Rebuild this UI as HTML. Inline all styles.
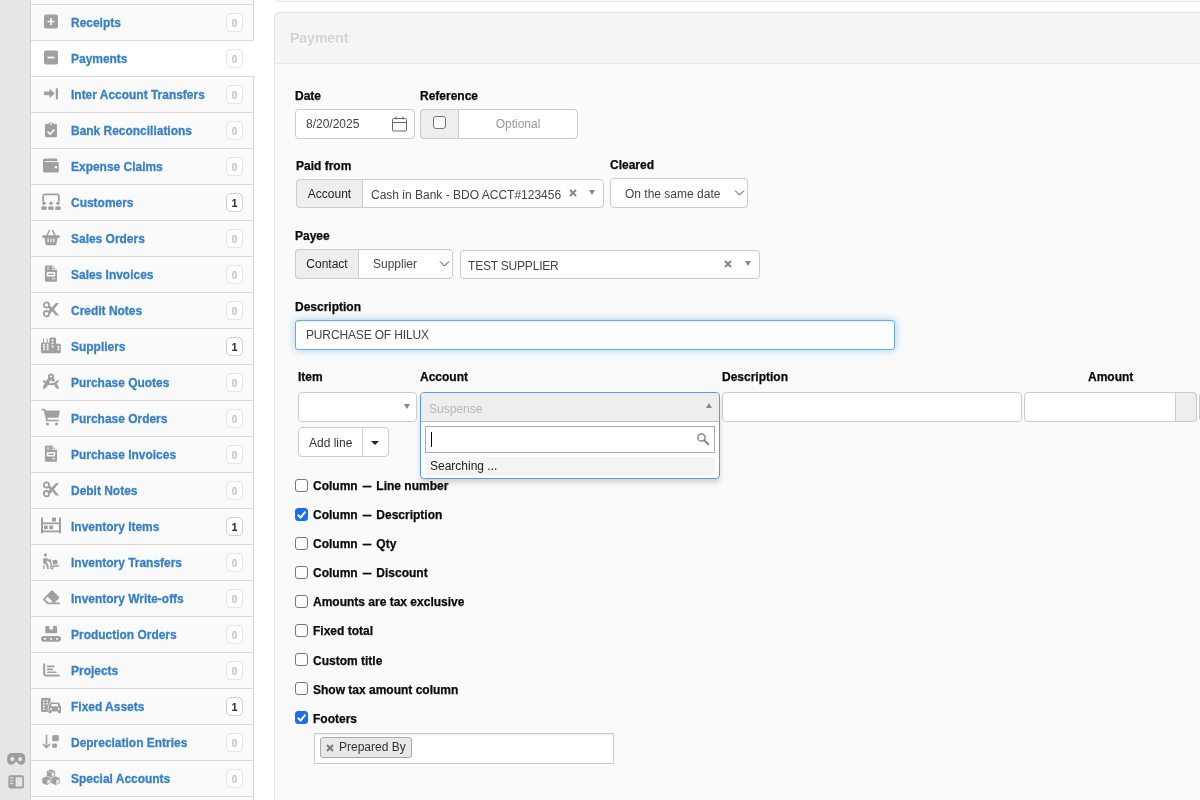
<!DOCTYPE html>
<html><head><meta charset="utf-8"><title>Payment</title>
<style>
*{box-sizing:border-box;margin:0;padding:0}
html,body{width:1200px;height:800px;overflow:hidden;background:#fff;font-family:"Liberation Sans",Arial,Helvetica,sans-serif;font-size:12px;color:#333}
.abs{position:absolute}
#strip{position:absolute;left:0;top:0;width:31px;height:800px;background:#e6e6e6;border-right:1px solid #cfcfcf}
#side{position:absolute;left:31px;top:0;width:223px;height:800px;background:#fafafa;border-right:1px solid #d4d4d4}
.row{position:absolute;left:0;width:223px;height:37px;border-top:1px solid #d9d9d9;border-bottom:1px solid #d9d9d9;border-right:1px solid #d4d4d4;background:#fafafa}
.row.sel{background:#fff;border-right-color:#fff}
.row .ic{position:absolute;left:10px;top:7px}
.row .t{position:absolute;left:40px;top:10px;font-size:13px;font-weight:bold;color:#3680c8;line-height:16px;white-space:nowrap;transform:scaleX(.92);transform-origin:0 50%;-webkit-text-stroke:.3px #3680c8}
.row .b{position:absolute;left:195px;top:8px;width:17px;height:19px;border:1px solid #e4e4e4;border-radius:5px;background:#fff;color:#c8c8c8;font-size:10px;font-weight:bold;text-align:center;line-height:19px;-webkit-text-stroke:.2px #c8c8c8}
.row .b.one{color:#333;border-color:#cfcfcf;-webkit-text-stroke:.2px #333}
#panel{position:absolute;left:274px;top:12px;width:960px;height:820px;border:1px solid #e3e3e3;border-radius:5px;background:#fafafa}
#phead{position:absolute;left:0;top:0;right:0;height:51px;background:#f5f5f5;border-bottom:1px solid #e8e8e8;border-radius:5px 5px 0 0}
#ptitle{position:absolute;left:290px;top:30px;font-size:14px;font-weight:bold;color:#d4d4d4;line-height:16px;text-shadow:0 1px 0 #fff}
#prev{position:absolute;left:274px;top:-20px;width:960px;height:22px;border:1px solid #e3e3e3;border-radius:5px;background:#fafafa}
.lbl{position:absolute;font-size:12px;font-weight:bold;color:#0a0a0a;-webkit-text-stroke:.25px #0a0a0a;line-height:14px;white-space:nowrap}
.box{position:absolute;border:1px solid #ccc;border-radius:4px;background:#fff}
.addon{position:absolute;background:#eee;border:1px solid #ccc;border-radius:4px 0 0 4px;color:#222;text-align:center;font-size:12px}
.txt{position:absolute;font-size:12px;color:#444;line-height:14px;white-space:nowrap}
.cb{position:absolute;width:13px;height:13px;border:1px solid #767676;border-radius:3px;background:#fff}
.cb.on{background:#1670f7;border-color:#1670f7}
.cb.on svg{position:absolute;left:-1px;top:-1px}
.cl{position:absolute;left:313px;font-size:12px;font-weight:bold;color:#0a0a0a;-webkit-text-stroke:.25px #0a0a0a;line-height:14px;white-space:nowrap}
.d{display:inline-block;transform:scaleX(.72)}
.arr{position:absolute;width:0;height:0;border-left:3.5px solid transparent;border-right:3.5px solid transparent;border-top:5px solid #888}
.arr.up{border-top:0;border-bottom:5px solid #888}
.x{position:absolute;font-size:11px;font-weight:bold;color:#888;line-height:12px}
#wrap{position:absolute;left:0;top:0;width:1200px;height:800px;overflow:hidden;will-change:transform}
</style></head><body><div id="wrap">
<div id="strip">
<svg class="abs" style="left:6px;top:751px" width="20" height="16" viewBox="0 0 20 16"><path d="M5.700 2h9a4.500 4.500 0 0 1 4.500 4.500v3a4.300 4.300 0 0 1-4.300 4.300c-1.600 0-2.500-.8-3.200-2-.4-.7-.8-1-1.500-1s-1.100.3-1.500 1c-.7 1.200-1.600 2-3.200 2a4.300 4.300 0 0 1-4.300-4.300v-3a4.500 4.500 0 0 1 4.500-4.500z" fill="#9e9e9e"/><circle cx="6.300" cy="8.100" r="2.100" fill="#e6e6e6"/><circle cx="14.100" cy="8.100" r="2.100" fill="#e6e6e6"/></svg>
<svg class="abs" style="left:8px;top:774px" width="17" height="15" viewBox="0 0 17 15"><rect x=".4" y="1.300" width="15.500" height="13.300" rx="2" fill="#9e9e9e"/><rect x="7.600" y="3.300" width="6.700" height="9.300" rx=".4" fill="#e6e6e6"/><path d="M2 3.900h3.400M2 6.700h3.400M2 9.500h3.400" stroke="#e6e6e6" stroke-width="1.300" opacity=".85"/></svg>
</div>
<div id="side">
<div class="row" style="top:4px"><svg class="ic" viewBox="0 0 20 20" width="20" height="20"><rect x="3" y="2.500" width="14" height="14" rx="2" fill="#a0a0a0"/><path d="M10 6v7M6.500 9.500h7" stroke="#fafafa" stroke-width="1.700"/></svg><span class="t">Receipts</span><span class="b">0</span></div>
<div class="row sel" style="top:40px"><svg class="ic" viewBox="0 0 20 20" width="20" height="20"><rect x="3" y="2.500" width="14" height="14" rx="2" fill="#a0a0a0"/><path d="M6.500 9.500h7" stroke="#ffffff" stroke-width="1.700"/></svg><span class="t">Payments</span><span class="b">0</span></div>
<div class="row" style="top:76px"><svg class="ic" viewBox="0 0 20 20" width="20" height="20"><path d="M3.600 7.600h4.900V4.700l5.300 4.800-5.300 4.800v-3H3.600a.6.600 0 0 1-.6-.6V8.200a.6.600 0 0 1 .6-.6z" fill="#a0a0a0"/><rect x="14.800" y="4.200" width="2.200" height="11" rx=".4" fill="#a0a0a0"/></svg><span class="t">Inter Account Transfers</span><span class="b">0</span></div>
<div class="row" style="top:112px"><svg class="ic" viewBox="0 0 20 20" width="20" height="20"><path d="M5.500 3.800h2.300a2.300 2.300 0 0 1 4.400 0h2.300a1.500 1.500 0 0 1 1.500 1.500v10.400a1.500 1.500 0 0 1-1.500 1.500h-9a1.500 1.500 0 0 1-1.500-1.500V5.300a1.500 1.500 0 0 1 1.500-1.500z" fill="#a0a0a0"/><circle cx="10" cy="3.900" r=".9" fill="#fafafa"/><path d="M6.500 11.800l2.700 2.300 4.200-4.600" stroke="#fafafa" stroke-width="1.800" fill="none"/></svg><span class="t">Bank Reconciliations</span><span class="b">0</span></div>
<div class="row" style="top:148px"><svg class="ic" viewBox="0 0 20 20" width="20" height="20"><path d="M4.200 2.400h11.300a.8.800 0 0 1 .8.800V6h0a1.500 1.500 0 0 1 1.500 1.500v7.400a1.500 1.500 0 0 1-1.500 1.500H3.600a1.600 1.600 0 0 1-1.600-1.600V4.600a2.200 2.200 0 0 1 2.200-2.200z" fill="#a0a0a0"/><path d="M4 5.550h13" stroke="#fafafa" stroke-width=".9"/><rect x="13.800" y="10" width="2.200" height="2.300" rx=".3" fill="#fafafa"/></svg><span class="t">Expense Claims</span><span class="b">0</span></div>
<div class="row" style="top:184px"><svg class="ic" viewBox="0 0 20 20" width="20" height="20"><path d="M2.100 8.800V4.400a2 2 0 0 1 2-2h11.800a2 2 0 0 1 2 2v4.400" stroke="#a0a0a0" stroke-width="1.800" fill="none" stroke-linecap="round"/><circle cx="3.00" cy="11.300" r="1.700" fill="#a0a0a0"/><rect x="0.10" y="14.300" width="5.800" height="3.600" rx="1.700" fill="#a0a0a0"/><circle cx="10.00" cy="11.300" r="1.700" fill="#a0a0a0"/><rect x="7.10" y="14.300" width="5.800" height="3.600" rx="1.700" fill="#a0a0a0"/><circle cx="17.00" cy="11.300" r="1.700" fill="#a0a0a0"/><rect x="14.10" y="14.300" width="5.800" height="3.600" rx="1.700" fill="#a0a0a0"/></svg><span class="t">Customers</span><span class="b one">1</span></div>
<div class="row" style="top:220px"><svg class="ic" viewBox="0 0 20 20" width="20" height="20"><rect x="1.200" y="7.300" width="17.600" height="2.400" rx=".9" fill="#a0a0a0"/><path d="M3.200 9h13.600l-1.400 7.200a1.400 1.400 0 0 1-1.400 1.100H6a1.400 1.400 0 0 1-1.400-1.100z" fill="#a0a0a0"/><path d="M5.800 7.600l2.700-5.200M14.200 7.600l-2.700-5.200" stroke="#a0a0a0" stroke-width="1.500" fill="none" stroke-linecap="round"/><path d="M7.100 10.600v3.600M10 10.600v3.600M12.900 10.600v3.600" stroke="#fafafa" stroke-width="1.200"/></svg><span class="t">Sales Orders</span><span class="b">0</span></div>
<div class="row" style="top:256px"><svg class="ic" viewBox="0 0 20 20" width="20" height="20"><g transform="translate(0 .6)"><path d="M5.400 1h6.300l4.300 4.300v10.400a1.500 1.500 0 0 1-1.500 1.500h-9.100a1.500 1.500 0 0 1-1.500-1.500V2.500a1.500 1.500 0 0 1 1.500-1.500z" fill="#a0a0a0"/><path d="M11.500 .8v4.700h4.700z" fill="#fafafa"/><path d="M12.400 2.300v2.300h2.300z" fill="#a0a0a0"/><rect x="6" y="1.900" width="2.400" height="3.500" fill="#fafafa" opacity=".4"/><rect x="5.700" y="7.400" width="8.600" height="4.500" rx=".9" fill="#fafafa"/><rect x="7.300" y="9" width="5.400" height="1.400" fill="#a0a0a0"/><rect x="11" y="13.100" width="3.200" height="1.700" fill="#fafafa" opacity=".55"/></g></svg><span class="t">Sales Invoices</span><span class="b">0</span></div>
<div class="row" style="top:292px"><svg class="ic" viewBox="0 0 20 20" width="20" height="20"><circle cx="5.500" cy="5" r="2.700" fill="none" stroke="#a0a0a0" stroke-width="1.800"/><circle cx="5.500" cy="13.700" r="2.700" fill="none" stroke="#a0a0a0" stroke-width="1.800"/><path d="M7.200 11.200L14.900 2.900h3.100L9.200 13.700z" fill="#a0a0a0"/><path d="M7.300 7.400l1.700-1.700 3.200 3.300-2 2.200z" fill="#a0a0a0"/><path d="M10.800 10.800l1.900-1.900 5.300 6.600h-3.100z" fill="#a0a0a0"/></svg><span class="t">Credit Notes</span><span class="b">0</span></div>
<div class="row" style="top:328px"><svg class="ic" viewBox="0 0 20 20" width="20" height="20"><path d="M0 7.200a.8.800 0 0 1 .8-.8h1.300V2.800a.5.500 0 0 1 1 0v3.600h2.600V2.800a.5.500 0 0 1 1 0v3.600h1.700V3a1.500 1.500 0 0 1 1.500-1.500h3.700a1.500 1.500 0 0 1 1.500 1.500v4.800h3.700a1 1 0 0 1 1 1v7.400a1 1 0 0 1-1 1H1a1 1 0 0 1-1-1z" fill="#a0a0a0"/><rect x="2.10" y="7.85" width="1.800" height="1.700" fill="#fafafa"/><rect x="2.10" y="10.15" width="1.800" height="1.700" fill="#fafafa"/><rect x="2.10" y="12.55" width="1.800" height="1.700" fill="#fafafa"/><rect x="5.70" y="7.85" width="1.800" height="1.700" fill="#fafafa"/><rect x="5.70" y="10.15" width="1.800" height="1.700" fill="#fafafa"/><rect x="5.70" y="12.55" width="1.800" height="1.700" fill="#fafafa"/><rect x="10.70" y="3.35" width="1.800" height="1.700" fill="#fafafa"/><rect x="10.70" y="6.45" width="1.800" height="1.700" fill="#fafafa"/><rect x="10.70" y="9.65" width="1.800" height="1.700" fill="#fafafa"/><rect x="16.50" y="10.05" width="1.800" height="1.700" fill="#fafafa"/><rect x="16.50" y="12.55" width="1.800" height="1.700" fill="#fafafa"/></svg><span class="t">Suppliers</span><span class="b one">1</span></div>
<div class="row" style="top:364px"><svg class="ic" viewBox="0 0 20 20" width="20" height="20"><circle cx="10" cy="4.400" r="2" fill="none" stroke="#a0a0a0" stroke-width="2"/><path d="M7.400 5.600l2.800 1.600-4.800 8.200-3.200 2.200.2-3.800z" fill="#a0a0a0"/><path d="M12.600 5.600l-2.800 1.600 1.600 2.800 2.600-1.400zM13 12.800l2.500-1.500 2 3.100.3 3.200-2.900-1.700z" fill="#a0a0a0"/><path d="M3 9.100c3 4 10.600 4.200 13.800 0" fill="none" stroke="#a0a0a0" stroke-width="1.900" stroke-linecap="round"/></svg><span class="t">Purchase Quotes</span><span class="b">0</span></div>
<div class="row" style="top:400px"><svg class="ic" viewBox="0 0 20 20" width="20" height="20"><path d="M1.300 1.700h2.300l2.400 10.800h11" fill="none" stroke="#a0a0a0" stroke-width="1.700" stroke-linecap="round" stroke-linejoin="round"/><path d="M3.800 2.500h14.100a.9.900 0 0 1 .9 1.100l-1.300 5.400a.9.900 0 0 1-.9.700H5.400z" fill="#a0a0a0"/><circle cx="6.500" cy="15.900" r="1.500" fill="#a0a0a0"/><circle cx="15.500" cy="15.900" r="1.500" fill="#a0a0a0"/></svg><span class="t">Purchase Orders</span><span class="b">0</span></div>
<div class="row" style="top:436px"><svg class="ic" viewBox="0 0 20 20" width="20" height="20"><g transform="translate(0 .6)"><path d="M5.400 1h6.300l4.300 4.300v10.400a1.500 1.500 0 0 1-1.500 1.500h-9.100a1.500 1.500 0 0 1-1.500-1.500V2.500a1.500 1.500 0 0 1 1.500-1.500z" fill="#a0a0a0"/><path d="M11.500 .8v4.700h4.700z" fill="#fafafa"/><path d="M12.400 2.300v2.300h2.300z" fill="#a0a0a0"/><rect x="6" y="1.900" width="2.400" height="3.500" fill="#fafafa" opacity=".4"/><rect x="5.700" y="7.400" width="8.600" height="4.500" rx=".9" fill="#fafafa"/><rect x="7.300" y="9" width="5.400" height="1.400" fill="#a0a0a0"/><rect x="11" y="13.100" width="3.200" height="1.700" fill="#fafafa" opacity=".55"/></g></svg><span class="t">Purchase Invoices</span><span class="b">0</span></div>
<div class="row" style="top:472px"><svg class="ic" viewBox="0 0 20 20" width="20" height="20"><circle cx="5.500" cy="5" r="2.700" fill="none" stroke="#a0a0a0" stroke-width="1.800"/><circle cx="5.500" cy="13.700" r="2.700" fill="none" stroke="#a0a0a0" stroke-width="1.800"/><path d="M7.200 11.200L14.900 2.900h3.100L9.200 13.700z" fill="#a0a0a0"/><path d="M7.300 7.400l1.700-1.700 3.200 3.300-2 2.200z" fill="#a0a0a0"/><path d="M10.800 10.800l1.900-1.900 5.300 6.600h-3.100z" fill="#a0a0a0"/></svg><span class="t">Debit Notes</span><span class="b">0</span></div>
<div class="row" style="top:508px"><svg class="ic" viewBox="0 0 20 20" width="20" height="20"><rect x="0" y="1.500" width="2" height="15.700" rx=".5" fill="#a0a0a0"/><rect x="18" y="1.500" width="2" height="15.700" rx=".5" fill="#a0a0a0"/><rect x="1" y="6.400" width="18" height="1.800" fill="#a0a0a0"/><rect x="1" y="14.500" width="18" height="1.800" fill="#a0a0a0"/><rect x="11" y="1.400" width="4" height="4" rx=".6" fill="#a0a0a0"/><rect x="3" y="9.500" width="3.700" height="3.800" rx=".6" fill="#a0a0a0"/><rect x="8.300" y="9.500" width="3.700" height="3.800" rx=".6" fill="#a0a0a0"/></svg><span class="t">Inventory Items</span><span class="b one">1</span></div>
<div class="row" style="top:544px"><svg class="ic" viewBox="0 0 20 20" width="20" height="20"><circle cx="4.450" cy="2.900" r="1.550" fill="#a0a0a0"/><path d="M2.300 7L3.100 6.200L5.400 6.200L6.400 6.700L9.300 8.800L8.500 9.900L5.800 8.300L5.500 10.600L7 12.600L7.700 17L6.300 17L5.700 13.300L3.800 11.800L2.300 11.300Z" fill="#a0a0a0" stroke="#a0a0a0" stroke-width=".4" stroke-linejoin="round"/><path d="M2.300 13L3.700 13.700L3.700 17L2.300 17Z" fill="#a0a0a0"/><path d="M9.100 7.400L10.500 14.500L17.500 13.700" fill="none" stroke="#a0a0a0" stroke-width="1.400" stroke-linecap="round" stroke-linejoin="round"/><circle cx="10.900" cy="15.500" r="1.300" fill="none" stroke="#a0a0a0" stroke-width="1.200"/><rect x="11.700" y="8" width="4.700" height="4.400" rx=".5" fill="#a0a0a0" transform="rotate(-10 14 10.200)"/></svg><span class="t">Inventory Transfers</span><span class="b">0</span></div>
<div class="row" style="top:580px"><svg class="ic" viewBox="0 0 20 20" width="20" height="20"><path d="M9.800 2.900a1.600 1.600 0 0 1 2.300 0l5.500 5.500a1.600 1.600 0 0 1 0 2.300l-3.900 3.900h4.400a.8.800 0 0 1 0 1.700H7a1.600 1.600 0 0 1-1.100-.5l-3.200-3.200a1.600 1.600 0 0 1 0-2.300z" fill="#a0a0a0"/><path d="M6.500 8.600l5.300 5.300-.7.700h-3.600l-3-3a.5.500 0 0 1 0-.7z" fill="#fafafa"/></svg><span class="t">Inventory Write-offs</span><span class="b">0</span></div>
<div class="row" style="top:616px"><svg class="ic" viewBox="0 0 20 20" width="20" height="20"><path d="M5.300 2h3.100v3.400h3.600V2h3.100a1 1 0 0 1 1 1v5.200a1 1 0 0 1-1 1H5.300a1 1 0 0 1-1-1V3a1 1 0 0 1 1-1z" fill="#a0a0a0"/><rect x="0" y="11.900" width="20" height="5.800" rx="2.900" fill="#a0a0a0"/><rect x="3" y="13.900" width="1.900" height="1.800" rx=".4" fill="#fafafa"/><rect x="9.050" y="13.900" width="1.900" height="1.800" rx=".4" fill="#fafafa"/><rect x="15.100" y="13.900" width="1.900" height="1.800" rx=".4" fill="#fafafa"/></svg><span class="t">Production Orders</span><span class="b">0</span></div>
<div class="row" style="top:652px"><svg class="ic" viewBox="0 0 20 20" width="20" height="20"><path d="M3.200 4.200v9.700a1.500 1.500 0 0 0 1.500 1.500h13" stroke="#a0a0a0" stroke-width="2" fill="none" stroke-linecap="round"/><path d="M6.700 6.400h6.200M6.700 9.400h4.600M6.700 12.300h8.200" stroke="#a0a0a0" stroke-width="1.600" stroke-linecap="round"/></svg><span class="t">Projects</span><span class="b">0</span></div>
<div class="row" style="top:688px"><svg class="ic" viewBox="0 0 20 20" width="20" height="20"><rect x="0" y="1.900" width="9.700" height="14" rx="1.200" fill="#a0a0a0"/><rect x="2.1" y="4.3" width="1.600" height="1.500" fill="#fafafa"/><rect x="2.1" y="7.0" width="1.600" height="1.500" fill="#fafafa"/><rect x="2.1" y="9.7" width="1.600" height="1.500" fill="#fafafa"/><rect x="2.1" y="12.4" width="1.600" height="1.500" fill="#fafafa"/><rect x="5.3" y="4.3" width="1.600" height="1.500" fill="#fafafa"/><rect x="5.3" y="7.0" width="1.600" height="1.500" fill="#fafafa"/><path d="M10.400 6.400h6.800a1.500 1.500 0 0 1 1.400 .9l1.100 2.900a1.500 1.500 0 0 1 .5 1.100v5.200a.8.800 0 0 1-.8.800h-1.500a.8.800 0 0 1-.8-.8v-.9H10.500v.9a.8.800 0 0 1-.8.800H8.200a.8.800 0 0 1-.8-.8v-5.200a1.500 1.500 0 0 1 .5-1.100l1.100-2.900a1.500 1.500 0 0 1 1.400-.9z" fill="#a0a0a0" stroke="#fafafa" stroke-width="1.200" paint-order="stroke"/><path d="M10.900 7.900h5.800l.9 2.400h-7.600z" fill="#fafafa"/><circle cx="9.900" cy="13" r=".9" fill="#fafafa"/><circle cx="17.700" cy="13" r=".9" fill="#fafafa"/></svg><span class="t">Fixed Assets</span><span class="b one">1</span></div>
<div class="row" style="top:724px"><svg class="ic" viewBox="0 0 20 20" width="20" height="20"><path d="M5.500 3.300v12M2.300 12.300l3.200 3.400 3.200-3.400" stroke="#a0a0a0" stroke-width="1.600" fill="none" stroke-linecap="round" stroke-linejoin="round"/><rect x="11.200" y="2.900" width="6.700" height="6.300" rx="1.500" fill="#a0a0a0"/><rect x="11.200" y="11.500" width="4.800" height="4.300" rx="1.300" fill="#a0a0a0"/></svg><span class="t">Depreciation Entries</span><span class="b">0</span></div>
<div class="row" style="top:760px"><svg class="ic" viewBox="0 0 20 20" width="20" height="20"><path d="M10 1.300l4.200 1.900v4.600L10 9.700 5.800 7.800V3.200z" fill="#a0a0a0"/><path d="M5.500 8.300l4.200 1.900v4.900l-4.200 1.900-4.200-1.900v-4.900z" fill="#a0a0a0"/><path d="M14.500 8.300l4.200 1.900v4.900l-4.200 1.900-4.200-1.900v-4.900z" fill="#a0a0a0"/><path d="M10.600 5.400l2.900-1.300v3.200l-2.900 1.300zM6.100 12.600l2.900-1.300v3.400l-2.900 1.300zM15.100 12.600l2.900-1.300v3.400l-2.900 1.300z" fill="#fafafa" opacity=".8"/><path d="M7 3.300l3 1.300 3-1.300" stroke="#fafafa" stroke-width=".7" fill="none" opacity=".8"/></svg><span class="t">Special Accounts</span><span class="b">0</span></div>
</div>
<div id="prev"></div>
<div id="panel"><div id="phead"></div></div>
<div id="ptitle">Payment</div>

<!-- Date / Reference -->
<div class="lbl" style="left:295px;top:89px">Date</div>
<div class="lbl" style="left:420px;top:89px">Reference</div>
<div class="box" style="left:295px;top:109px;width:120px;height:30px"></div>
<div class="txt" style="left:306px;top:117px">8/20/2025</div>
<svg class="abs" style="left:390.500px;top:115px" width="17" height="18" viewBox="0 0 17 18"><rect x="1.500" y="3.500" width="14" height="12.500" rx="1" fill="none" stroke="#666" stroke-width="1"/><path d="M1.500 7.500h14M5 1.500v3M12 1.500v3" stroke="#666" stroke-width="1"/></svg>
<div class="box" style="left:420px;top:109px;width:158px;height:30px"></div>
<div class="addon" style="left:420px;top:109px;width:39px;height:30px"></div>
<div class="cb" style="left:433px;top:116px"></div>
<div class="txt" style="left:459px;top:117px;width:118px;text-align:center;color:#999">Optional</div>

<!-- Paid from / Cleared -->
<div class="lbl" style="left:296px;top:159px">Paid from</div>
<div class="lbl" style="left:610px;top:158px">Cleared</div>
<div class="box" style="left:296px;top:179px;width:308px;height:29px"></div>
<div class="addon" style="left:296px;top:179px;width:67px;height:29px;line-height:29px">Account</div>
<div class="txt" style="left:371px;top:188px">Cash in Bank - BDO ACCT#123456</div>
<svg class="abs" style="left:569px;top:189px" width="8" height="8" viewBox="0 0 8 8"><path d="M1 1l6 6M7 1l-6 6" stroke="#888" stroke-width="2" fill="none"/></svg>
<div class="arr" style="left:589px;top:190px"></div>
<div class="box" style="left:610px;top:178px;width:138px;height:30px"></div>
<div class="txt" style="left:625px;top:187px">On the same date</div>
<svg class="abs" style="left:734px;top:189px" width="11" height="8" viewBox="0 0 11 8"><path d="M1 1.500l4.500 4.500L10 1.500" fill="none" stroke="#444" stroke-width="1"/></svg>

<!-- Payee -->
<div class="lbl" style="left:295px;top:229px">Payee</div>
<div class="box" style="left:295px;top:249px;width:158px;height:30px"></div>
<div class="addon" style="left:295px;top:249px;width:64px;height:30px;line-height:28px">Contact</div>
<div class="txt" style="left:373px;top:257px">Supplier</div>
<svg class="abs" style="left:439px;top:260px" width="11" height="8" viewBox="0 0 11 8"><path d="M1 1.500l4.500 4.500L10 1.500" fill="none" stroke="#444" stroke-width="1"/></svg>
<div class="box" style="left:460px;top:250px;width:300px;height:29px"></div>
<div class="txt" style="left:468px;top:259px;letter-spacing:-.2px">TEST SUPPLIER</div>
<svg class="abs" style="left:724px;top:260px" width="8" height="8" viewBox="0 0 8 8"><path d="M1 1l6 6M7 1l-6 6" stroke="#888" stroke-width="2" fill="none"/></svg>
<div class="arr" style="left:745px;top:261px"></div>

<!-- Description -->
<div class="lbl" style="left:295px;top:300px">Description</div>
<div class="box" style="left:295px;top:320px;width:600px;height:30px;border-color:#66afe9;border-radius:3px;box-shadow:inset 0 1px 1px rgba(0,0,0,.075),0 0 8px rgba(102,175,233,.6)"></div>
<div class="txt" style="left:306px;top:328px;letter-spacing:-.15px">PURCHASE OF HILUX</div>

<!-- Lines header -->
<div class="lbl" style="left:298px;top:370px">Item</div>
<div class="lbl" style="left:420px;top:370px">Account</div>
<div class="lbl" style="left:722px;top:370px">Description</div>
<div class="lbl" style="left:1088px;top:370px">Amount</div>

<div class="box" style="left:298px;top:392px;width:119px;height:30px"></div>
<div class="arr" style="left:404px;top:404px"></div>

<div class="box" style="left:722px;top:392px;width:300px;height:30px"></div>
<div class="box" style="left:1024px;top:392px;width:173px;height:30px"></div>
<div class="abs" style="left:1175px;top:392px;width:22px;height:30px;background:#eee;border:1px solid #ccc;border-radius:0 4px 4px 0"></div>
<div class="abs" style="left:1199px;top:392px;width:20px;height:30px;background:#eee;border:1px solid #ccc;border-radius:4px"></div>

<!-- Add line -->
<div class="box" style="left:298px;top:427px;width:91px;height:30px"></div>
<div class="abs" style="left:362px;top:428px;width:1px;height:28px;background:#ccc"></div>
<div class="txt" style="left:309px;top:436px;color:#333">Add line</div>
<div class="abs" style="left:371px;top:441px;width:0;height:0;border-left:4px solid transparent;border-right:4px solid transparent;border-top:4px solid #222"></div>

<!-- open dropdown -->
<div class="abs" style="left:420px;top:392px;width:300px;height:87px;border:1px solid #5897fb;border-radius:4px;background:#fff;box-shadow:0 4px 5px rgba(0,0,0,.15)"></div>
<div class="abs" style="left:421px;top:393px;width:298px;height:29px;background:#eee;border-bottom:1px solid #bbb;border-radius:3px 3px 0 0"></div>
<div class="txt" style="left:429px;top:402px;color:#b5b5b5">Suspense</div>
<div class="arr up" style="left:706px;top:403px"></div>
<div class="abs" style="left:425px;top:426px;width:290px;height:27px;border:1px solid #aaa;background:#fff"></div>
<div class="abs" style="left:431px;top:432px;width:1px;height:15px;background:#000"></div>
<svg class="abs" style="left:696px;top:432px" width="14" height="14" viewBox="0 0 14 14"><circle cx="5.500" cy="5.500" r="3.600" fill="none" stroke="#888" stroke-width="1.500"/><path d="M8.300 8.300l4 4" stroke="#888" stroke-width="2" stroke-linecap="round"/></svg>
<div class="abs" style="left:425px;top:457px;width:290px;height:18px;background:#f4f4f4"></div>
<div class="txt" style="left:430px;top:459px;color:#222">Searching ...</div>

<!-- checkboxes -->
<div class="cb" style="left:295px;top:479px"></div><div class="cl" style="top:479px">Column <span class="d">—</span> Line number</div>
<div class="cb on" style="left:295px;top:508px"><svg width="13" height="13" viewBox="0 0 13 13"><path d="M2.800 6.800l2.800 2.800L10.400 3.600" fill="none" stroke="#fff" stroke-width="2"/></svg></div><div class="cl" style="top:508px">Column <span class="d">—</span> Description</div>
<div class="cb" style="left:295px;top:537px"></div><div class="cl" style="top:537px">Column <span class="d">—</span> Qty</div>
<div class="cb" style="left:295px;top:566px"></div><div class="cl" style="top:566px">Column <span class="d">—</span> Discount</div>
<div class="cb" style="left:295px;top:595px"></div><div class="cl" style="top:595px">Amounts are tax exclusive</div>
<div class="cb" style="left:295px;top:624px"></div><div class="cl" style="top:624px">Fixed total</div>
<div class="cb" style="left:295px;top:653px"></div><div class="cl" style="top:654px">Custom title</div>
<div class="cb" style="left:295px;top:682px"></div><div class="cl" style="top:683px">Show tax amount column</div>
<div class="cb on" style="left:295px;top:711px"><svg width="13" height="13" viewBox="0 0 13 13"><path d="M2.800 6.800l2.800 2.800L10.400 3.600" fill="none" stroke="#fff" stroke-width="2"/></svg></div><div class="cl" style="top:712px">Footers</div>

<!-- footers multiselect -->
<div class="abs" style="left:314px;top:733px;width:300px;height:31px;border:1px solid #ccc;background:#fff;box-shadow:inset 0 1px 1px rgba(0,0,0,.08)"></div>
<div class="abs" style="left:320px;top:737px;width:92px;height:21px;border:1px solid #aaa;border-radius:3px;background:#e8e8e8"></div>
<svg class="abs" style="left:325.500px;top:743.500px" width="8" height="8" viewBox="0 0 8 8"><path d="M1 1l6 6M7 1l-6 6" stroke="#777" stroke-width="1.900" fill="none"/></svg>
<div class="txt" style="left:339px;top:740px;color:#333">Prepared By</div>
</div></body></html>
